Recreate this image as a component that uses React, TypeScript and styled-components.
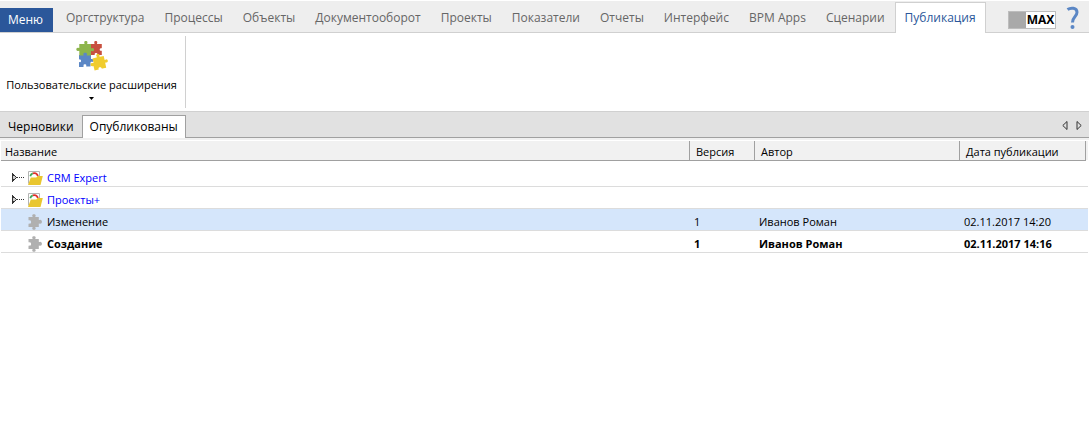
import React, { useState } from "react";
import styled, { createGlobalStyle } from "styled-components";

const GlobalStyle = createGlobalStyle`
  *, *::before, *::after { box-sizing: border-box; }
  body {
    margin: 0;
    background: #fff;
    color: #000;
    font: 12px/16px "Open Sans", "Noto Sans", sans-serif;
  }
  button { font: inherit; color: inherit; background: none; border: 0; padding: 0; cursor: pointer; }
`;

const TopBar = styled.header`
  display: flex;
  align-items: flex-end;
  height: 33px;
  background: #eee;
  border-top: 1px solid #fff;
  box-shadow: inset 0 -1px #d0d0d0;
`;

const MenuButton = styled.button`
  flex: none;
  width: 53px;
  height: 24px;
  margin-bottom: 1px;
  padding-right: 2px;
  background: #2b579a;
  color: #fff;
`;

const MainTabs = styled.nav`
  display: flex;
  margin-left: 3px;
`;

const MainTab = styled.button<{ $active: boolean }>`
  height: 31px;
  padding: 0 9px 1px;
  border: 1px solid ${(p) => (p.$active ? "#d0d0d0" : "transparent")};
  border-bottom: 0;
  background: ${(p) => (p.$active ? "#fff" : "transparent")};
  color: ${(p) => (p.$active ? "#2b579a" : "#666")};
  white-space: nowrap;
`;

const TopTools = styled.div`
  display: flex;
  align-items: flex-start;
  gap: 10px;
  height: 100%;
  margin-left: auto;
  padding: 5px 9px 0 0;
`;

const ModeSwitch = styled.label`
  display: flex;
  width: 48px;
  height: 18px;
  margin-top: 5px;
  border: 1px solid #bdbdbd;
  background: #fff;
  font-weight: 700;
  cursor: pointer;
`;

const ModeInput = styled.input`
  appearance: none;
  width: 17px;
  height: 16px;
  margin: 0;
  background: #a9a9a9;
`;

const ModeText = styled.span`
  flex: 1;
  text-align: center;
`;

const Ribbon = styled.section`
  display: flex;
  height: 79px;
  padding: 3px 0;
  border-bottom: 1px solid #d0d0d0;
`;

const RibbonGroup = styled.div`
  width: 186px;
  padding: 4px 8px 0 6px;
  border-right: 1px solid #d0d0d0;
`;

const RibbonButton = styled.button`
  display: flex;
  flex-direction: column;
  align-items: center;
  width: 100%;
  font-size: 11px;
  white-space: nowrap;

  span { margin: 5px 0 4px; }
`;

const PageBar = styled.nav`
  display: flex;
  align-items: flex-end;
  height: 26px;
  background: #e1e1e1;
  box-shadow: inset 0 -1px #a0a0a0;
`;

const PageTab = styled.button<{ $active: boolean }>`
  height: 23px;
  padding: 0 7px;
  border: 1px solid ${(p) => (p.$active ? "#a0a0a0" : "transparent")};
  border-bottom: 0;
  background: ${(p) => (p.$active ? "#fff" : "transparent")};
`;

const PageArrows = styled.div`
  display: flex;
  align-items: center;
  gap: 8px;
  height: 100%;
  margin-left: auto;
  padding-right: 7px;

  button { display: flex; }
`;

const Grid = styled.main`
  padding: 3px 1px 0;
  box-shadow: inset 0 2px #f0f0f0;
`;

const Table = styled.table`
  width: 100%;
  table-layout: fixed;
  border-collapse: separate;
  border-spacing: 0;
  font-size: 11px;
`;

const Col = styled.col<{ $width?: number }>`
  width: ${(p) => (p.$width ? `${p.$width}px` : "auto")};
`;

const HeadCell = styled.th<{ $first?: boolean }>`
  height: 20px;
  padding: 2px 0 0 ${(p) => (p.$first ? 4 : 6)}px;
  border-right: 1px solid #a0a0a0;
  border-bottom: 1px solid #a0a0a0;
  background: #f1f1f1;
  font-weight: 400;
  text-align: left;
`;

const HeadFiller = styled.td`
  border-bottom: 1px solid #fff;
  background: #f1f1f1;
`;

const Body = styled.tbody`
  &::before { content: ""; display: block; height: 4px; }
`;

const Row = styled.tr<{ $selected?: boolean; $bold?: boolean }>`
  background: ${(p) => (p.$selected ? "#d5e6fb" : "#fff")};
  font-weight: ${(p) => (p.$bold ? 700 : 400)};
`;

const Cell = styled.td`
  height: 22px;
  padding: 4px 0 0 4px;
  border-bottom: 1px solid #dcdcdc;
  white-space: nowrap;
`;

const NameLine = styled.div<{ $folder: boolean }>`
  display: flex;
  align-items: center;
  gap: 4px;
  padding-left: ${(p) => (p.$folder ? 7 : 23)}px;
  color: ${(p) => (p.$folder ? "#00f" : "#000")};

  button { display: flex; }
  svg { flex: none; }
`;

const PuzzleIcon = () => (
  <svg width="32" height="32" viewBox="0 0 32 32" aria-hidden="true">
    <path fill="#c8503f" d="M14 4H18C19 4 18.200 3 18.200 2.200 18.200.500 21.300.500 21.300 2.200 21.300 3 20.500 4 21.500 4H25.800V7.500C25.800 8.500 25.200 8.200 24.600 8.200 23.400 8.200 23.400 10.800 24.600 10.800 25.200 10.800 25.800 10.500 25.800 11.300V15H22C21.200 15 21.400 14.500 21.400 13.900 21.400 12.700 18.700 12.700 18.700 13.900 18.700 14.500 18.900 15 18 15H14Z" />
    <path fill="#5b87c5" d="M3 15H15V18.500C15 19.300 15.600 18.900 16.300 18.900 17.800 18.900 17.800 21.900 16.300 21.900 15.600 21.900 14.500 21.500 14.500 22.500V26.500H10.800C9.800 26.500 10.300 25.900 10.300 25.200 10.300 24 7.500 24 7.500 25.200 7.500 25.900 8 27 7 27H3V22.800C3 21.800 3.500 22.200 4.200 22.200 5.400 22.200 5.400 19.400 4.200 19.400 3.500 19.400 3 19.700 3 18.800Z" />
    <path fill="#8db54b" d="M3.300 4H8C9 4 8.200 3 8.200 2.300 8.200.600 11.500.600 11.500 2.300 11.500 3 10.700 4 11.700 4H15V8C15 8.700 16 8 16.800 8 18.500 8 18.500 11.300 16.800 11.300 16 11.300 15 10.500 15 11.500V15.500H3.300V11.300C3.300 10.200 2.500 11 1.800 11-.2 11-.2 7.700 1.800 7.700 2.500 7.700 3.300 8.400 3.300 7.400Z" />
    <path fill="#5b87c5" d="M7.800 16C7.800 15 7.300 14.700 7.300 13.900 7.300 12.300 11 12.300 11 13.900 11 14.700 10.500 15 10.500 16Z" />
    <path fill="#f0cc2e" d="M16.500 18.500 20.500 17.500C21.500 17.200 20.300 16.300 20.200 15.500 20 13.800 23.300 13.300 23.500 15 23.600 15.800 23 17 24 16.800L27.700 16 28.500 19.500C28.700 20.500 29.300 19.500 30 19.400 32 19 32.500 22.200 30.700 22.600 30 22.700 29.100 22.200 29.300 23.200L30.200 27.800 26.500 28.600C25.500 28.800 25.700 28.300 25.300 27.700 24.500 26.700 22.300 27.300 22.500 28.500 22.600 29.200 23.300 29.400 22.500 29.600L18.600 30.500 17.600 26.500C17.400 25.500 16.800 26.300 16 26.300 14.300 26.300 14 23.300 15.800 23 16.600 22.900 17.700 23.500 17.500 22.500Z" />
  </svg>
);

const PieceIcon = () => (
  <svg width="15" height="16" viewBox="0 0 15 16" aria-hidden="true">
    <path fill="#b0b0b0" d="M.5 3H4.300C5.100 3 4.200 2.300 4.200 1.600 4.200-.2 7.700-.2 7.700 1.600 7.700 2.300 6.800 3 7.600 3H10.800V5.500C10.800 6.600 11.600 5.800 12.200 5.800 14.500 5.800 14.500 9.800 12.200 9.800 11.600 9.800 10.800 9 10.800 10V13H7.600C6.800 13 7.700 13.700 7.700 14.400 7.700 16.200 4.200 16.200 4.200 14.400 4.200 13.700 5.100 13 4.300 13H.5V10.300C.5 9.300 1.200 9.700 1.900 9.700 3.500 9.700 3.500 6.300 1.900 6.300 1.200 6.300.5 6.700.5 5.700Z" />
  </svg>
);

const FolderIcon = () => (
  <svg width="15" height="14" viewBox="0 0 15 14" aria-hidden="true">
    <path fill="#fff" stroke="#b4b4b4" d="M.5 12.500V.5H11.500V6" />
    <path fill="none" stroke="#3aa655" strokeWidth="1.800" d="M2.300 5.200C2.700 3.600 3.600 2.800 4.800 2.400" />
    <path fill="none" stroke="#e0302a" strokeWidth="1.800" d="M4.800 2.400C7.200 1.700 9.200 2.800 9.900 5" />
    <path fill="#e9c62f" d="M0 14 2.800 6.500H8.300L9.500 5H14.800L12.500 14Z" />
  </svg>
);

const ExpandIcon = () => (
  <svg width="12" height="9" viewBox="0 0 12 9" shapeRendering="crispEdges" aria-hidden="true">
    <path fill="#ccc" stroke="#333" d="M.5 1V8L4.500 4.500Z" />
    <path stroke="#333" strokeDasharray="1 1" d="M5 4.500H12" />
  </svg>
);

const HelpIcon = () => (
  <svg width="14" height="24" viewBox="0 0 14 24" aria-hidden="true">
    <path fill="none" stroke="#5b87c5" strokeWidth="3" d="M1.500 3.600C4.500 1.500 11 1.300 11 6.300 11 10.500 6.500 10.500 6.500 16.500" />
    <circle cx="6.500" cy="21" r="2" fill="#5b87c5" />
  </svg>
);

const MAIN_TABS = [
  "Оргструктура", "Процессы", "Объекты", "Документооборот", "Проекты", "Показатели",
  "Отчеты", "Интерфейс", "BPM Apps", "Сценарии", "Публикация",
];
const PAGE_TABS = ["Черновики", "Опубликованы"];

type Item = { name: string; folder?: boolean; bold?: boolean; version?: string; author?: string; date?: string };
const ITEMS: Item[] = [
  { name: "CRM Expert", folder: true },
  { name: "Проекты+", folder: true },
  { name: "Изменение", version: "1", author: "Иванов Роман", date: "02.11.2017 14:20" },
  { name: "Создание", version: "1", author: "Иванов Роман", date: "02.11.2017 14:16", bold: true },
];

export default function App() {
  const [tab, setTab] = useState("Публикация");
  const [page, setPage] = useState("Опубликованы");
  const [selected, setSelected] = useState("Изменение");

  return (
    <>
      <GlobalStyle />
      <TopBar>
        <MenuButton>Меню</MenuButton>
        <MainTabs>
          {MAIN_TABS.map((t) => (
            <MainTab key={t} $active={t === tab} onClick={() => setTab(t)}>{t}</MainTab>
          ))}
        </MainTabs>
        <TopTools>
          <ModeSwitch>
            <ModeInput type="checkbox" defaultChecked />
            <ModeText>MAX</ModeText>
          </ModeSwitch>
          <button aria-label="Справка"><HelpIcon /></button>
        </TopTools>
      </TopBar>

      <Ribbon>
        <RibbonGroup>
          <RibbonButton>
            <PuzzleIcon />
            <span>Пользовательские расширения</span>
            <svg width="5" height="3" viewBox="0 0 5 3" aria-hidden="true"><path d="M0 0H5L2.500 3Z" /></svg>
          </RibbonButton>
        </RibbonGroup>
      </Ribbon>

      <PageBar>
        {PAGE_TABS.map((t) => (
          <PageTab key={t} $active={t === page} onClick={() => setPage(t)}>{t}</PageTab>
        ))}
        <PageArrows>
          <button aria-label="Назад">
            <svg width="6" height="9" viewBox="0 0 6 9"><path fill="none" stroke="#333" d="M5 .5V8.500L.8 4.500Z" /></svg>
          </button>
          <button aria-label="Вперёд">
            <svg width="6" height="9" viewBox="0 0 6 9"><path fill="none" stroke="#333" d="M1 .5V8.500L5.200 4.500Z" /></svg>
          </button>
        </PageArrows>
      </PageBar>

      <Grid>
        <Table>
          <colgroup>
            <Col />
            <Col $width={65} />
            <Col $width={205} />
            <Col $width={126} />
            <Col $width={2} />
          </colgroup>
          <thead>
            <tr>
              <HeadCell $first>Название</HeadCell>
              <HeadCell>Версия</HeadCell>
              <HeadCell>Автор</HeadCell>
              <HeadCell>Дата публикации</HeadCell>
              <HeadFiller />
            </tr>
          </thead>
          <Body>
            {ITEMS.map((it) => (
              <Row key={it.name} $selected={it.name === selected} $bold={it.bold} onClick={() => setSelected(it.name)}>
                <Cell>
                  <NameLine $folder={!!it.folder}>
                    {it.folder && <button aria-label="Развернуть"><ExpandIcon /></button>}
                    {it.folder ? <FolderIcon /> : <PieceIcon />}
                    {it.name}
                  </NameLine>
                </Cell>
                <Cell>{it.version}</Cell>
                <Cell>{it.author}</Cell>
                <Cell colSpan={2}>{it.date}</Cell>
              </Row>
            ))}
          </Body>
        </Table>
      </Grid>
    </>
  );
}
